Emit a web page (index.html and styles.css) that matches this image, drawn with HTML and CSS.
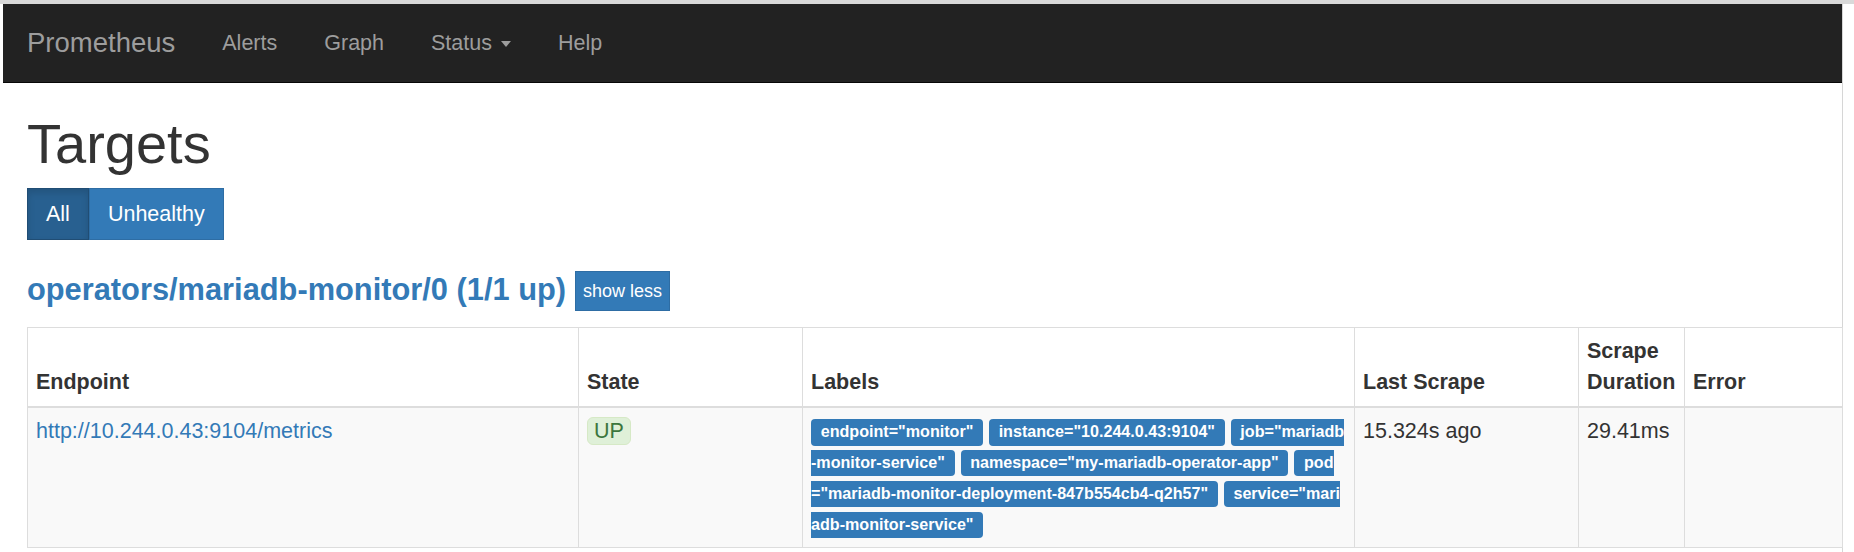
FILE: index.html
```html
<!DOCTYPE html>
<html lang="en">
<head>
<meta charset="utf-8">
<title>Prometheus Time Series Collection and Processing Server</title>
<link rel="stylesheet" href="styles.css">
</head>
<body>
<div class="topstrip"></div>
<div class="frame">
  <nav class="navbar">
    <a class="brand" href="#">Prometheus</a>
    <ul class="nav">
      <li><a href="#">Alerts</a></li>
      <li><a href="#">Graph</a></li>
      <li><a href="#">Status <span class="caret"></span></a></li>
      <li><a href="#">Help</a></li>
    </ul>
  </nav>
  <main class="container">
    <h1 class="title">Targets</h1>
    <div class="btn-group">
      <button class="btn btn-active">All</button><button class="btn">Unhealthy</button>
    </div>
    <h2 class="job">
      <a href="#" class="job-link">operators/mariadb-monitor/0 (1/1 up)</a>
      <button class="btn-toggle">show less</button>
    </h2>
    <table class="targets">
      <colgroup>
        <col class="c-endpoint">
        <col class="c-state">
        <col class="c-labels">
        <col class="c-last">
        <col class="c-dur">
        <col class="c-err">
      </colgroup>
      <thead>
        <tr>
          <th>Endpoint</th>
          <th>State</th>
          <th>Labels</th>
          <th>Last Scrape</th>
          <th>Scrape Duration</th>
          <th>Error</th>
        </tr>
      </thead>
      <tbody>
        <tr>
          <td><a href="#" class="endpoint">http://10.244.0.43:9104/metrics</a></td>
          <td><span class="state">UP</span></td>
          <td class="labels"><span class="label">endpoint="monitor"</span> <span class="label">instance="10.244.0.43:9104"</span> <span class="label">job="mariadb-monitor-service"</span> <span class="label">namespace="my-mariadb-operator-app"</span> <span class="label">pod="mariadb-monitor-deployment-847b554cb4-q2h57"</span> <span class="label">service="mariadb-monitor-service"</span></td>
          <td>15.324s ago</td>
          <td>29.41ms</td>
          <td></td>
        </tr>
      </tbody>
    </table>
  </main>
</div>
</body>
</html>
```

FILE: styles.css
```css
html, body {
  margin: 0;
  padding: 0;
  background: #ffffff;
}

body {
  width: 1854px;
  height: 552px;
  overflow: hidden;
  font-family: "Liberation Sans", Arial, Helvetica, sans-serif;
  font-size: 21.5px;
  line-height: 30.7px;
  color: #333333;
}

.topstrip {
  height: 4px;
  background: #d9d9d9;
}

.frame {
  margin-left: 3px;
  width: 1839px;
  height: 548px;
  border-right: 1px solid #d6d6d6;
  box-sizing: content-box;
}

/* Navbar */
.navbar {
  display: flex;
  align-items: center;
  height: 78px;
  background: #222222;
  border-bottom: 1px solid #080808;
}

.brand {
  padding: 0 23.5px 0 24px;
  font-size: 27.5px;
  line-height: 78px;
  color: #9d9d9d;
  text-decoration: none;
}

.nav {
  display: flex;
  margin: 0;
  padding: 0;
  list-style: none;
}

.nav a {
  display: block;
  padding: 0 23.5px;
  line-height: 78px;
  color: #9d9d9d;
  text-decoration: none;
}

.caret {
  display: inline-block;
  width: 0;
  height: 0;
  margin-left: 3px;
  vertical-align: middle;
  border-top: 6px solid #9d9d9d;
  border-left: 5.5px solid transparent;
  border-right: 5.5px solid transparent;
}

/* Main */
.container {
  padding: 0 0 0 24px;
}

.title {
  margin: 30px 0 0;
  font-size: 56px;
  line-height: 61.6px;
  font-weight: normal;
  color: #333333;
}

.btn-group {
  display: flex;
  margin-top: 13px;
}

.btn {
  font-family: inherit;
  font-size: 21.5px;
  line-height: 30.7px;
  padding: 10px 18px;
  border: 1px solid #2e6da4;
  background: #337ab7;
  color: #ffffff;
  border-radius: 0;
  margin: 0;
}

.btn-active {
  background: #286090;
  border-color: #204d74;
  box-shadow: inset 0 4px 7px rgba(0, 0, 0, 0.13);
}

.job {
  display: flex;
  align-items: center;
  gap: 9px;
  height: 40px;
  margin: 31px 0 0;
  font-size: 30.8px;
  font-weight: bold;
  line-height: 34px;
}

.job-link {
  color: #337ab7;
  text-decoration: none;
  position: relative;
  top: -1px;
}

.btn-toggle {
  font-family: inherit;
  font-size: 18px;
  font-weight: normal;
  line-height: 26px;
  height: 40px;
  padding: 0 7px;
  margin: 0;
  background: #337ab7;
  color: #ffffff;
  border: 1px solid #2e6da4;
  border-radius: 0;
}

/* Table */
.targets {
  margin-top: 16px;
  width: 1815px;
  table-layout: fixed;
  border-collapse: collapse;
  border-spacing: 0;
}

.c-endpoint { width: 551px; }
.c-state { width: 224px; }
.c-labels { width: 552px; }
.c-last { width: 224px; }
.c-dur { width: 106px; }
.c-err { width: 158px; }

.targets th,
.targets td {
  border: 1px solid #dddddd;
  padding: 8px;
  text-align: left;
  vertical-align: top;
  line-height: 30.7px;
}

.targets th {
  vertical-align: bottom;
  border-top: 1px solid #dddddd;
  border-bottom: 2px solid #dddddd;
  font-weight: bold;
  background: #ffffff;
}

.targets td {
  background: #f9f9f9;
}

.endpoint {
  color: #337ab7;
  text-decoration: none;
}

.state {
  display: inline-block;
  padding: 0 6px;
  line-height: 26px;
  background: #dff0d8;
  color: #3c763d;
  border: 1px solid #d6e9c6;
  border-radius: 6px;
}

.labels {
  word-break: break-all;
}

.label {
  padding: 0.2em 0.6em 0.3em;
  font-size: 75%;
  font-weight: bold;
  line-height: 1;
  color: #ffffff;
  background: #337ab7;
  border-radius: 0.25em;
  word-break: break-all;
}
```
